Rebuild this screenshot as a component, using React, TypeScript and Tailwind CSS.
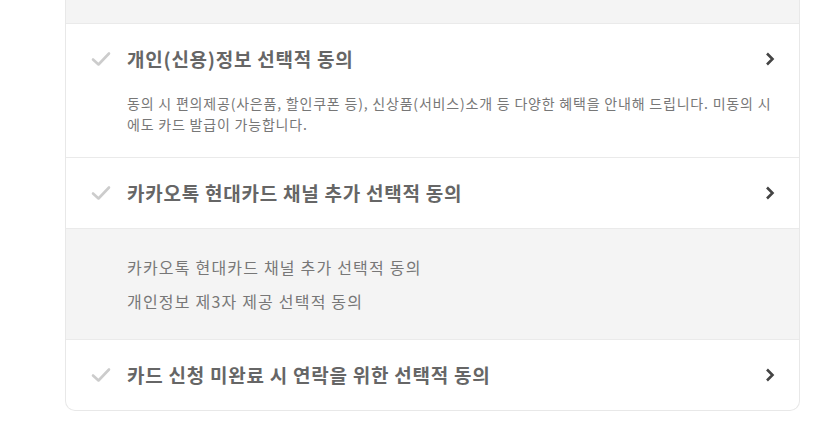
import React from "react";

const font = { fontFamily: '"Noto Sans CJK KR", "Noto Sans", sans-serif' };

function Check() {
  return (
    <svg width="20" height="16" viewBox="0 0 20 16" className="shrink-0">
      <path d="M2 8.5 L7.5 13.5 L18 2.5" fill="none" stroke="#cccccc" strokeWidth="2.6" strokeLinecap="round" strokeLinejoin="round" />
    </svg>
  );
}

function Chevron() {
  return (
    <svg width="10" height="14" viewBox="0 0 10 14" className="shrink-0">
      <path d="M2 1.5 L7.5 7 L2 12.5" fill="none" stroke="#444444" strokeWidth="2.6" />
    </svg>
  );
}

function Header({ title }: { title: string }) {
  return (
    <div className="flex h-[70px] items-center pl-[25px] pr-[24px]">
      <Check />
      <span className="ml-[16px] flex-1 text-[19px] font-bold text-[#666666] tracking-[0.75px]">{title}</span>
      <Chevron />
    </div>
  );
}

export default function App() {
  return (
    <div className="min-h-[431px] w-[839px] bg-white" style={font}>
      <div className="ml-[65px] w-[735px] rounded-b-[10px] border-x border-b border-[#e8e8e8] bg-white">
        <div className="h-[24px] border-b border-[#eaeaea] bg-[#f4f4f4]" />
        <div className="border-b border-[#eaeaea]">
          <Header title="개인(신용)정보 선택적 동의" />
          <p className="-mt-[1px] pb-[22px] pl-[61px] pr-[24px] text-[14px] leading-[21px] text-[#777777] tracking-[0.8px]">
            동의 시 편의제공(사은품, 할인쿠폰 등), 신상품(서비스)소개 등 다양한 혜택을 안내해 드립니다. 미동의 시
            <br />
            에도 카드 발급이 가능합니다.
          </p>
        </div>
        <div className="border-b border-[#eaeaea]">
          <Header title="카카오톡 현대카드 채널 추가 선택적 동의" />
        </div>
        <div className="border-b border-[#eaeaea] bg-[#f4f4f4] py-[21px] pl-[61px]">
          <div className="text-[16px] leading-[34px] text-[#777777] tracking-[1.2px]">카카오톡 현대카드 채널 추가 선택적 동의</div>
          <div className="text-[16px] leading-[34px] text-[#777777] tracking-[1.2px]">개인정보 제3자 제공 선택적 동의</div>
        </div>
        <Header title="카드 신청 미완료 시 연락을 위한 선택적 동의" />
      </div>
    </div>
  );
}
